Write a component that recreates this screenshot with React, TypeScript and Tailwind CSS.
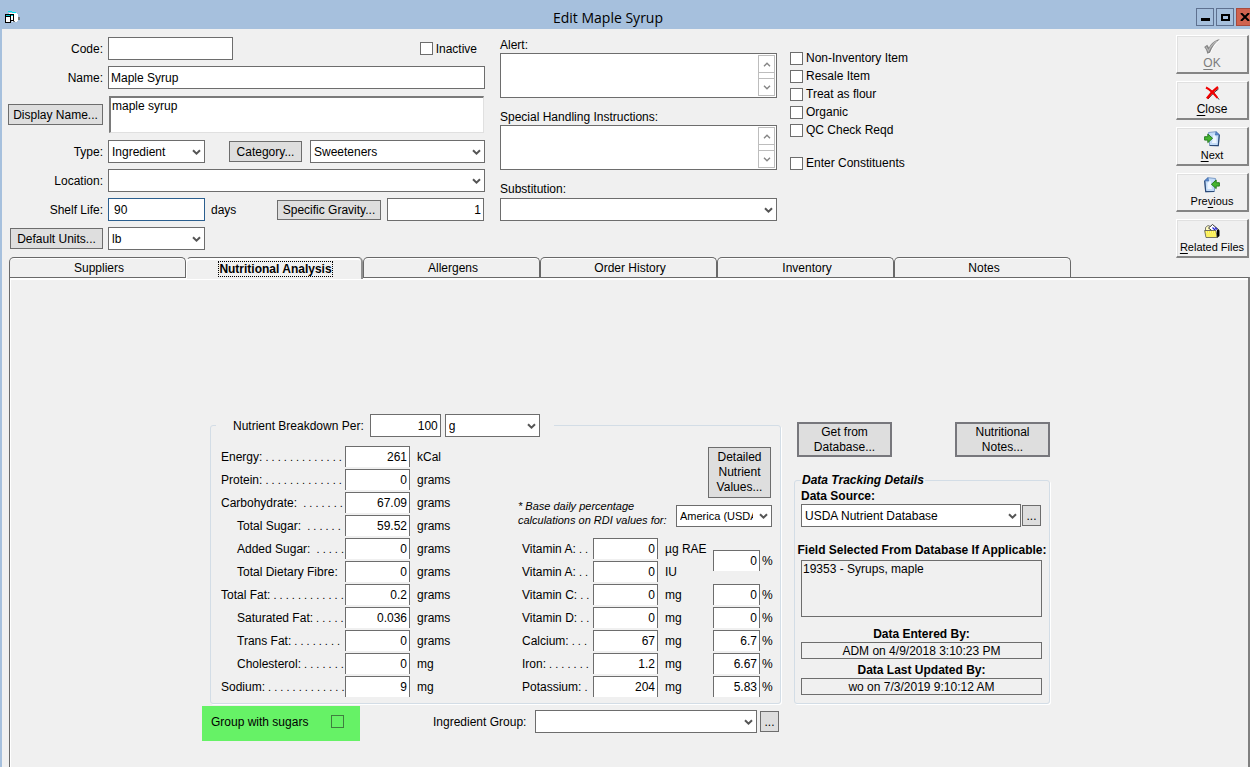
import { useState } from 'react'
import clsx from 'clsx'

const FIELD = 'border border-[#6d6d6d] bg-white text-black outline-none'
const PUSH = 'border border-[#6d6d6d] bg-[#dedede] text-center'

interface SelectProps {
  id: string
  label?: string
  value?: string
  className?: string
  selectClassName?: string
}

function Select({ id, label, value = '', className, selectClassName = 'h-[23px]' }: SelectProps) {
  return (
    <div className={clsx('relative', className)}>
      <select
        id={id}
        aria-label={label}
        defaultValue={value}
        className={clsx(FIELD, 'block w-full appearance-none pr-[18px] pl-[3px]', selectClassName)}
      >
        <option value={value}>{value}</option>
      </select>
      <svg
        className="pointer-events-none absolute top-1/2 right-1 -mt-[3px] h-[7px] w-[9px]"
        viewBox="0 0 9 7"
        fill="none"
        stroke="#555"
        strokeWidth="2"
      >
        <path d="M1 1.2 L4.5 4.7 L8 1.2" />
      </svg>
    </div>
  )
}

function Check({ label }: { label: string }) {
  return (
    <label className="flex h-[18px] items-center gap-[3px] whitespace-nowrap">
      <input type="checkbox" className="h-[13px] w-[13px] appearance-none border border-[#6d6d6d] bg-white" />
      {label}
    </label>
  )
}

function ScrollArrow({ d, label }: { d: string; label: string }) {
  return (
    <button type="button" aria-label={label} className="flex h-4 items-center justify-center">
      <svg className="h-[5px] w-2" viewBox="0 0 8 5" fill="none" stroke="#858585" strokeWidth="1.4">
        <path d={d} />
      </svg>
    </button>
  )
}

function ScrollBox({ id, label }: { id: string; label: string }) {
  return (
    <div>
      <label htmlFor={id} className="block h-4 leading-4">
        {label}
      </label>
      <div className="flex h-[45px] border border-[#6d6d6d] bg-white p-px">
        <textarea id={id} className="min-w-0 flex-1 resize-none px-[2px] outline-none" />
        <div className="flex w-[17px] flex-col border border-[#bdbdbd]">
          <ScrollArrow d="M1 4.3 L4 1.3 L7 4.3" label="Scroll up" />
          <div className="flex-1 border-y border-[#bdbdbd]" />
          <ScrollArrow d="M1 0.7 L4 3.7 L7 0.7" label="Scroll down" />
        </div>
      </div>
    </div>
  )
}

function TickIcon() {
  return (
    <svg className="h-4 w-4" viewBox="0 0 16 16">
      <path d="M1 9 3.800 7 5.500 9.500C8 5 11.500 2.300 16 1.500 12 4.500 8.500 9 6.500 14.500L4 15.500C3.500 13 2.500 11 1 9Z" fill="#fff" />
      <path d="M.2 8 3.200 5.800 5 8.500C7.500 4 11 1 15.800.3 11.500 3.500 8 8 6 13.800L3.300 14.800C2.800 12 1.800 10 .2 8Z" fill="#858585" />
      <path d="M2 7.800 4.400 12C6.500 7.500 9.500 4 13 2" fill="none" stroke="#b8b8b8" strokeWidth="1.200" />
    </svg>
  )
}

function CrossIcon() {
  return (
    <svg className="h-4 w-4" viewBox="0 0 16 16" fill="none">
      <path d="M4 4 C8 6 11 9.500 15 14.500M14.500 4 C11 6.500 8 9.500 4 14" stroke="#333" />
      <path d="M2 2.500 C7 5 10 8.500 13.500 13" stroke="#f00000" strokeWidth="2" />
      <path d="M14 2 C9 5.500 6 9 3 13.500" stroke="#f00000" strokeWidth="2.400" />
    </svg>
  )
}

function PageArrowIcon({ back = false }: { back?: boolean }) {
  return (
    <svg className="h-4 w-4" viewBox="0 0 16 16">
      <g transform={back ? 'translate(16 0) scale(-1 1)' : undefined}>
        <path d="M4.500 1.500 12 .7l3.300 3-1 11-8.600-.2Z" fill="#c3dcf8" stroke="#7d9cc6" />
        <path d="m15.300 3.700-1 11-8.600-.2" fill="none" stroke="#2b4a78" strokeWidth="1.200" />
        <path d="m12 .7-.5 3.300 3.800-.3Z" fill="#5d8fd6" stroke="#3d66a5" strokeWidth=".7" />
        <path d="M9.500 3.500 12.500 6v6H8Z" fill="#eef6ff" />
        <path d="M.6 5.700h3.200V3l4.800 4.300-4.800 4.300V9.100H.6Z" fill="#45b52f" stroke="#1d7416" strokeWidth=".9" />
      </g>
    </svg>
  )
}

function FolderIcon() {
  return (
    <svg className="h-4 w-4" viewBox="0 0 16 16">
      <path d="M1.500 8V4.500L4 2.500l2.500 1V8Z" fill="#fffbc0" stroke="#555" strokeWidth=".8" />
      <path d="m4.500 5 4-3.500L15 7l-3 4Z" fill="#fff" stroke="#222" strokeWidth=".9" />
      <path d="m8.500 4.500 3 3M11 4.500l2 2" stroke="#2020d0" strokeWidth="1.200" />
      <path d="m13 6.500 2.500 1V13L13 15Z" fill="#000" />
      <path d="M.6 7.500H12l1 7H2Z" fill="#fbee3a" stroke="#555" strokeWidth=".8" />
      <path d="M2 9h10M2.500 11h10M2.500 13h10" stroke="#fffbd0" strokeDasharray="1 1" />
    </svg>
  )
}

interface ActionProps {
  icon: React.ReactNode
  before?: string
  accessKey: string
  after: string
  disabled?: boolean
  small?: boolean
}

function ActionButton({ icon, before = '', accessKey, after, disabled, small }: ActionProps) {
  return (
    <button
      type="button"
      disabled={disabled}
      className={clsx(
        'flex h-[39px] w-full flex-col items-center gap-px border-t border-r-2 border-b-2 border-l border-t-white border-r-[#858585] border-b-[#858585] border-l-white pt-[3px] leading-[15px] whitespace-nowrap shadow-[inset_1px_1px_0_#e0e0e0] disabled:text-[#7d7d7d]',
        small && 'text-[11px]',
      )}
    >
      {icon}
      <span>
        {before}
        <span className="underline underline-offset-2">{accessKey}</span>
        {after}
      </span>
    </button>
  )
}

const TABS = ['Suppliers', 'Nutritional Analysis', 'Allergens', 'Order History', 'Inventory', 'Notes']

interface Nutrient {
  name: string
  dots: number
  value: string
  unit: string
  indent?: boolean
  spaced?: boolean
}

const NUTRIENTS: Nutrient[] = [
  { name: 'Energy', dots: 13, value: '261', unit: 'kCal' },
  { name: 'Protein', dots: 13, value: '0', unit: 'grams' },
  { name: 'Carbohydrate', dots: 7, value: '67.09', unit: 'grams', spaced: true },
  { name: 'Total Sugar', dots: 6, value: '59.52', unit: 'grams', indent: true, spaced: true },
  { name: 'Added Sugar', dots: 5, value: '0', unit: 'grams', indent: true, spaced: true },
  { name: 'Total Dietary Fibre', dots: 0, value: '0', unit: 'grams', indent: true },
  { name: 'Total Fat', dots: 12, value: '0.2', unit: 'grams' },
  { name: 'Saturated Fat', dots: 5, value: '0.036', unit: 'grams', indent: true },
  { name: 'Trans Fat', dots: 8, value: '0', unit: 'grams', indent: true },
  { name: 'Cholesterol', dots: 7, value: '0', unit: 'mg', indent: true },
  { name: 'Sodium', dots: 13, value: '9', unit: 'mg' },
]

interface Vitamin {
  name: string
  dots: number
  value: string
  unit: string
  percent?: string
  tall?: boolean
}

const VITAMINS: Vitamin[] = [
  { name: 'Vitamin A', dots: 2, value: '0', unit: 'µg RAE', percent: '0', tall: true },
  { name: 'Vitamin A', dots: 2, value: '0', unit: 'IU' },
  { name: 'Vitamin C', dots: 2, value: '0', unit: 'mg', percent: '0' },
  { name: 'Vitamin D', dots: 2, value: '0', unit: 'mg', percent: '0' },
  { name: 'Calcium', dots: 3, value: '67', unit: 'mg', percent: '6.7' },
  { name: 'Iron', dots: 7, value: '1.2', unit: 'mg', percent: '6.67' },
  { name: 'Potassium', dots: 1, value: '204', unit: 'mg', percent: '5.83' },
]

const NUMBER = 'h-[21px] border border-b-0 border-[#6d6d6d] bg-white pr-[2px] text-right outline-none'

function Leader({ count, spaced }: { count: number; spaced?: boolean }) {
  if (!count) return null
  return (
    <span aria-hidden="true" className="text-[11px] whitespace-pre">
      {(spaced ? '  ' : ' ') + Array(count).fill('.').join(' ')}
    </span>
  )
}

function NutrientRow({ name, dots, value, unit, indent, spaced }: Nutrient) {
  const id = 'n-' + name.replace(/ /g, '-')
  return (
    <div className="flex h-[23px] leading-[23px]">
      <label htmlFor={id} className={clsx('w-[124px] whitespace-nowrap', indent && 'pl-4')}>
        {name}:<Leader count={dots} spaced={spaced} />
      </label>
      <input id={id} defaultValue={value} className={clsx(NUMBER, 'w-[65px]')} />
      <span className="pl-[7px]">{unit}</span>
    </div>
  )
}

function VitaminRow({ id, name, dots, value, unit, percent, tall }: Vitamin & { id: string }) {
  return (
    <>
      <label htmlFor={id} className="col-start-1 whitespace-nowrap">
        {name}:<Leader count={dots} />
      </label>
      <input id={id} defaultValue={value} className={clsx(NUMBER, 'w-full')} />
      <span className="pl-[7px] whitespace-nowrap">{unit}</span>
      {percent && (
        <div className={clsx('flex gap-[2px]', tall && 'row-span-2 pt-3')}>
          <input aria-label={name + ' percent'} defaultValue={percent} className={clsx(NUMBER, 'w-[47px]')} />%
        </div>
      )}
    </>
  )
}

function TitleBar() {
  const box = 'flex h-[18px] w-[18px] items-center justify-center border'
  return (
    <header className="flex h-[29px] overflow-hidden bg-[#a6c0dd]">
      <svg className="mt-[10px] ml-1 h-4 w-4" viewBox="0 0 16 16" shapeRendering="crispEdges">
        <path d="M5 3h7l2 2v5l-2 2H8Z" fill="#fff" />
        <path d="M4 1h4v1h4v1H8V2H4Z" fill="#00e5ee" />
        <path d="M14 7h2v3h-2ZM9 11h2v1H9Z" fill="#777" />
        <path d="M4 4h6v7H4Z" fill="#000" />
        <path d="M5 6h4v4H5Z" fill="#fff" />
        <path d="M1 4h6v9H1Z" fill="#000" />
        <path d="M2 7h4v5H2Z" fill="#fff" />
        <path d="M2 5h4v1H2ZM7 5h2v1H7Z" fill="#00c8d0" />
      </svg>
      <h1 className="flex-1 pt-[7px] text-center font-['Open_Sans',sans-serif] text-[14px] leading-[22px]">
        Edit Maple Syrup
      </h1>
      <div className="mt-2 -mr-1 flex gap-[2px]">
        <button type="button" aria-label="Minimize" className={clsx(box, 'border-[#5e7190]')}>
          <span className="mt-1 h-[3px] w-[9px] bg-black" />
        </button>
        <button type="button" aria-label="Maximize" className={clsx(box, 'border-[#5e7190]')}>
          <span className="h-[7px] w-[9px] border-2 border-black" />
        </button>
        <button type="button" aria-label="Close window" className={clsx(box, 'border-[#a84a3c] bg-[#d0634f]')}>
          <svg className="h-2 w-[10px]" viewBox="0 0 10 8" stroke="#000" strokeWidth="2">
            <path d="m1 0 8 8M9 0 1 8" />
          </svg>
        </button>
      </div>
    </header>
  )
}

function DetailsForm() {
  const label = 'w-[102px] shrink-0 pr-px text-right'
  const row = 'flex items-center'
  return (
    <div className="flex w-[483px] flex-col gap-[6px] pt-2">
      <div className={row}>
        <label htmlFor="code" className={label}>
          Code:
        </label>
        <input id="code" className={clsx(FIELD, 'ml-1 h-[23px] w-[125px] px-[2px]')} />
        <div className="mr-2 ml-auto">
          <Check label="Inactive" />
        </div>
      </div>
      <div className={row}>
        <label htmlFor="name" className={label}>
          Name:
        </label>
        <input id="name" defaultValue="Maple Syrup" className={clsx(FIELD, 'ml-1 h-[23px] min-w-0 flex-1 px-[2px]')} />
      </div>
      <div className="flex h-[39px] items-center">
        <div className={label}>
          <button type="button" className={clsx(PUSH, 'h-[21px] w-[95px]')}>
            Display Name...
          </button>
        </div>
        <textarea
          aria-label="Display name"
          defaultValue="maple syrup"
          className="mr-px ml-[5px] h-[37px] min-w-0 flex-1 resize-none border-t-2 border-r border-b border-l-2 border-t-[#7a7a7a] border-r-[#e0e0e0] border-b-[#e0e0e0] border-l-[#7a7a7a] bg-white px-px pt-px leading-[15px] outline-none"
        />
      </div>
      <div className={row}>
        <label htmlFor="type" className={label}>
          Type:
        </label>
        <Select id="type" value="Ingredient" className="ml-1 w-[97px]" />
        <button type="button" className={clsx(PUSH, 'ml-6 h-[21px] w-[73px]')}>
          Category...
        </button>
        <Select id="category" label="Category" value="Sweeteners" className="ml-2 flex-1" />
      </div>
      <div className={row}>
        <label htmlFor="location" className={label}>
          Location:
        </label>
        <Select id="location" className="ml-1 flex-1" />
      </div>
      <div className={row}>
        <label htmlFor="shelf" className={label}>
          Shelf Life:
        </label>
        <input
          id="shelf"
          defaultValue="90"
          className="ml-1 h-[23px] w-[97px] border border-[#2b5f8f] bg-white px-[5px] outline-none"
        />
        <span className="ml-[6px]">days</span>
        <button type="button" className={clsx(PUSH, 'ml-auto h-5 w-[104px] leading-[18px]')}>
          Specific Gravity...
        </button>
        <input
          aria-label="Specific gravity"
          defaultValue="1"
          className={clsx(FIELD, 'mr-px ml-[6px] h-[23px] w-[97px] px-[2px] text-right')}
        />
      </div>
      <div className={row}>
        <div className={clsx(label, 'pr-[2px]')}>
          <button type="button" className={clsx(PUSH, 'h-[21px] w-[93px]')}>
            Default Units...
          </button>
        </div>
        <Select id="units" label="Default units" value="lb" className="ml-1 w-[97px]" />
      </div>
    </div>
  )
}

function NutrientBreakdown() {
  return (
    <fieldset className="w-[571px] rounded-[3px] border border-[#d3dde6] pr-2 pb-1 pl-[10px] shadow-[1px_1px_0_#fff]">
      <legend className="-ml-[5px] bg-[#f0f0f0] pr-[14px] pl-[17px]">
        <span className="flex items-center">
          <label htmlFor="per">Nutrient Breakdown Per:</label>
          <input
            id="per"
            defaultValue="100"
            className={clsx(FIELD, 'ml-[6px] h-[23px] w-[71px] px-[2px] text-right')}
          />
          <Select id="per-unit" label="Unit" value="g" className="ml-1 w-[95px]" />
        </span>
      </legend>
      <div className="flex justify-between pt-[9px]">
        <div>
          {NUTRIENTS.map(n => (
            <NutrientRow key={n.name} {...n} />
          ))}
        </div>
        <div className="flex w-[254px] flex-col pt-px">
          <button type="button" className={clsx(PUSH, 'mr-px h-[51px] w-[63px] self-end leading-[15px]')}>
            Detailed Nutrient Values...
          </button>
          <div className="mt-px flex items-end justify-between">
            <label htmlFor="rdi" className="text-[11px] leading-[14px] whitespace-nowrap italic">
              * Base daily percentage
              <br />
              calculations on RDI values for:
            </label>
            <Select id="rdi" value="America (USDA)" className="w-24" selectClassName="h-[22px] text-[11px]" />
          </div>
          <div className="mt-[11px] grid auto-rows-[23px] grid-cols-[71px_65px_55px_auto] pl-1 leading-[23px]">
            {VITAMINS.map((v, i) => (
              <VitaminRow key={i} id={'v-' + i} {...v} />
            ))}
          </div>
        </div>
      </div>
    </fieldset>
  )
}

function DataTracking() {
  const big = 'h-[35px] w-[95px] border-2 border-[#77777c] bg-[#dedede] leading-[15px]'
  const readout = 'block h-[17px] w-full border border-[#6d6d6d] text-center outline-none'
  return (
    <div className="ml-[13px] w-64 pt-2">
      <div className="flex justify-between pl-[3px]">
        <button type="button" className={big}>
          Get from Database...
        </button>
        <button type="button" className={big}>
          Nutritional Notes...
        </button>
      </div>
      <fieldset className="mt-[15px] min-w-0 rounded-[3px] border border-[#d3dde6] px-[6px] pb-2 shadow-[1px_1px_0_#fff]">
        <legend className="bg-[#f0f0f0] px-px leading-4 font-bold italic">Data Tracking Details</legend>
        <label htmlFor="source" className="block leading-4 font-bold">
          Data Source:
        </label>
        <div className="flex items-center gap-px pr-[2px]">
          <Select id="source" value="USDA Nutrient Database" className="flex-1" />
          <button type="button" aria-label="Browse data sources" className={clsx(PUSH, 'h-[21px] w-[19px] leading-3')}>
            ...
          </button>
        </div>
        <label htmlFor="field" className="-mx-1 mt-[15px] block text-center leading-4 font-bold whitespace-nowrap">
          Field Selected From Database If Applicable:
        </label>
        <div className="pt-[2px] pr-px">
          <textarea
            id="field"
            readOnly
            defaultValue="19353 - Syrups, maple"
            className="block h-[57px] w-full resize-none border border-[#6d6d6d] px-px leading-4 outline-none"
          />
          <label htmlFor="entered" className="mt-[9px] block text-center leading-4 font-bold">
            Data Entered By:
          </label>
          <input id="entered" readOnly defaultValue="ADM on 4/9/2018 3:10:23 PM" className={readout} />
          <label htmlFor="updated" className="mt-[3px] block text-center leading-4 font-bold">
            Data Last Updated By:
          </label>
          <input id="updated" readOnly defaultValue="wo on 7/3/2019 9:10:12 AM" className={readout} />
        </div>
      </fieldset>
    </div>
  )
}

export default function App() {
  const [active, setActive] = useState('Nutritional Analysis')

  return (
    <div className="flex min-h-screen flex-col overflow-x-hidden bg-[#f0f0f0] font-['Liberation_Sans',Arial,sans-serif] text-[12px] leading-4 text-black">
      <TitleBar />
      <main className="flex flex-1 flex-col border-l-2 border-[#a6c0dd]">
        <div className="flex">
          <DetailsForm />
          <div className="ml-[15px] flex w-[277px] flex-col gap-[11px] pt-2">
            <ScrollBox id="alert" label="Alert:" />
            <ScrollBox id="handling" label="Special Handling Instructions:" />
            <div>
              <label htmlFor="substitution" className="block leading-4">
                Substitution:
              </label>
              <Select id="substitution" className="mt-px" />
            </div>
          </div>
          <div className="ml-[13px] pt-5">
            <Check label="Non-Inventory Item" />
            <Check label="Resale Item" />
            <Check label="Treat as flour" />
            <Check label="Organic" />
            <Check label="QC Check Reqd" />
            <div className="mt-[15px]">
              <Check label="Enter Constituents" />
            </div>
          </div>
          <div className="mr-px -mb-px ml-auto flex w-[73px] flex-col gap-[7px] pt-[6px]">
            <ActionButton icon={<TickIcon />} accessKey="O" after="K" disabled />
            <ActionButton icon={<CrossIcon />} accessKey="C" after="lose" />
            <ActionButton icon={<PageArrowIcon />} accessKey="N" after="ext" small />
            <ActionButton icon={<PageArrowIcon back />} before="Pre" accessKey="v" after="ious" small />
            <ActionButton icon={<FolderIcon />} accessKey="R" after="elated Files" small />
          </div>
        </div>

        <div role="tablist" className="z-10 -mb-[2px] flex pl-[7px]">
          {TABS.map(tab => (
            <button
              key={tab}
              type="button"
              role="tab"
              aria-selected={tab === active}
              onClick={() => setActive(tab)}
              className={clsx(
                'w-[177px] rounded-t-[5px] border border-b-0 border-[#696969] pl-[3px]',
                tab === active
                  ? 'h-[22px] border-r-2 border-l-white border-r-[#909090] bg-[#f0f0f0] font-bold shadow-[inset_0_2px_0_#fff]'
                  : 'h-5 shadow-[inset_0_1px_0_#fff]',
              )}
            >
              <span
                className={clsx(
                  'inline-block leading-[14px]',
                  tab === active && 'outline outline-1 outline-dotted',
                )}
              >
                {tab}
              </span>
            </button>
          ))}
        </div>

        <div
          role="tabpanel"
          className="ml-[7px] flex-1 border-t border-r-2 border-l border-t-[#696969] border-r-[#808080] border-l-[#696969] pt-[136px] pl-[192px] shadow-[inset_1px_2px_0_#fff]"
        >
          <div className="flex items-start pl-2">
            <NutrientBreakdown />
            <DataTracking />
          </div>
          <div className="mt-[2px] flex items-start">
            <label className="flex h-[35px] w-[158px] items-center justify-between bg-[#66f266] pr-4 pb-1 pl-[9px]">
              Group with sugars
              <input type="checkbox" className="h-[13px] w-[13px] appearance-none border border-[#3f7f3f]" />
            </label>
            <div className="flex items-center pt-1 pl-[73px]">
              <label htmlFor="group" className="w-[102px]">
                Ingredient Group:
              </label>
              <Select id="group" className="w-[222px]" />
              <button
                type="button"
                aria-label="Browse ingredient groups"
                className={clsx(PUSH, 'ml-[3px] h-[21px] w-[19px] leading-3')}
              >
                ...
              </button>
            </div>
          </div>
        </div>
      </main>
    </div>
  )
}
